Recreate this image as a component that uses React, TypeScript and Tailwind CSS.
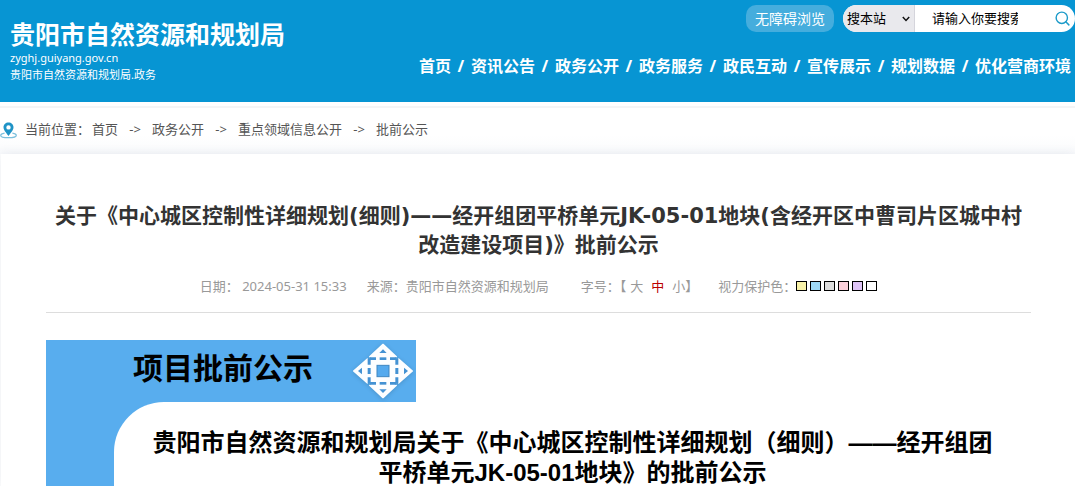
import { Search } from 'lucide-react';

const navItems = ['首页', '资讯公告', '政务公开', '政务服务', '政民互动', '宣传展示', '规划数据', '优化营商环境'];

const crumbs = ['首页', '政务公开', '重点领域信息公开', '批前公示'];

const eyeColors = [
    { name: '黄色', cls: 'bg-[#f9f3a9]' },
    { name: '蓝色', cls: 'bg-[#9fd9f6]' },
    { name: '灰色', cls: 'bg-[#dedede]' },
    { name: '粉色', cls: 'bg-[#fbd0da]' },
    { name: '紫色', cls: 'bg-[#e0c5f8]' },
    { name: '白色', cls: 'bg-white' },
];

function PinIcon() {
    return (
        <svg width="17" height="17" viewBox="0 0 17 17" aria-hidden="true">
            <path d="M4.6 11.2C1.9 11.6.7 12.5.7 13.4c0 1.400 3.400 2.300 7.800 2.300s7.800-.9 7.800-2.300c0-.9-1.200-1.800-3.900-2.200" fill="none" stroke="#7cc0dd" strokeWidth="1.200" />
            <path fillRule="evenodd" fill="#1f93c6" d="M8.500 0.500C5.600.5 3.500 2.600 3.500 5.300c0 3 3.200 6.200 5 8.600 1.800-2.400 5-5.600 5-8.600C13.500 2.600 11.400.5 8.500.5zM8.500 3.200a2.200 2.200 0 1 1 0 4.400 2.200 2.200 0 0 1 0-4.400z" />
        </svg>
    );
}

function PlanLogo() {
    return (
        <svg width="62" height="56" viewBox="6 5 186 168" aria-hidden="true" className="drop-shadow-sm">
            <path
                fill="#fdfeff"
                stroke="#fdfeff"
                strokeWidth="4"
                strokeLinejoin="round"
                d="M99 9L139 46H134V54H137V57H146V53L187 89L146 125V121H137V124H134V132H139L99 169L59 132H64V124H61V121H52V125L11 89L52 53V57H61V54H64V46H59Z"
            />
            <g fill="#4492d3">
                <rect x="81" y="72" width="36" height="34" fill="#55aaee" stroke="#3f86c2" strokeWidth="3" />
                <path d="M99 24L110 35H88Z" />
                <path d="M99 155L110 144H88Z" />
                <path d="M24 89L36 79V99Z" />
                <path d="M174 89L162 79V99Z" />
                <rect x="89" y="48" width="20" height="8" />
                <rect x="89" y="122" width="20" height="8" />
                <rect x="53" y="80" width="9" height="18" />
                <rect x="136" y="80" width="9" height="18" />
                <path d="M60 48H78V56H62V70H53V52H60Z" />
                <path d="M138 48H120V56H136V70H145V52H138Z" />
                <path d="M60 130H78V122H62V108H53V126H60Z" />
                <path d="M138 130H120V122H136V108H145V126H138Z" />
            </g>
        </svg>
    );
}

function Header() {
    return (
        <header className="flex h-[102px] shrink-0 justify-between bg-[#0795d3] text-white">
            <div className="flex shrink-0 flex-col pt-5 pl-[10px]">
                <a href="#" className="text-[25px] leading-[29px] font-bold">贵阳市自然资源和规划局</a>
                <span className="text-[11px] leading-[17px]">zyghj.guiyang.gov.cn</span>
                <span className="text-[11px] leading-[18px]">贵阳市自然资源和规划局.政务</span>
            </div>

            <div className="flex flex-col items-end pt-[5px]">
                <div className="flex h-[27px] gap-[9px]">
                    <button className="w-[88px] rounded-[10px] bg-[#45addd] text-sm">无障碍浏览</button>
                    <form className="flex w-[232px] items-stretch overflow-hidden rounded-full bg-white text-[13px] text-black">
                        <div className="relative flex w-[72px] shrink-0 border-r border-[#d5d5dc] bg-[#e9e9ed]">
                            <select aria-label="搜索范围" className="w-full appearance-none bg-transparent pl-1">
                                <option>搜本站</option>
                                <option>搜全网</option>
                            </select>
                            <svg className="pointer-events-none absolute top-[11px] right-1 h-[6px] w-2" viewBox="0 0 8 6" fill="none" stroke="#111" strokeWidth="1.500" aria-hidden="true">
                                <path d="M0.800 1L4 4.400L7.200 1" />
                            </svg>
                        </div>
                        <input
                            aria-label="搜索"
                            placeholder="请输入你要搜索"
                            className="ml-[17px] w-[86px] outline-none placeholder:text-black"
                        />
                        <button type="submit" aria-label="搜索" className="ml-auto pr-1 text-[#1d9bc9]">
                            <Search size={17} strokeWidth={2} />
                        </button>
                    </form>
                </div>
                <nav className="mt-[22px] mr-[4px] flex text-base leading-6 font-bold whitespace-nowrap">
                    {navItems.map((item, i) => (
                        <div key={item} className="flex">
                            {i > 0 && <span className="w-5 text-center">/</span>}
                            <a href="#">{item}</a>
                        </div>
                    ))}
                </nav>
            </div>
        </header>
    );
}

function Breadcrumb() {
    return (
        <div className="mt-1 flex h-12 shrink-0 items-center border-t-2 border-[#f4f5f6] bg-linear-to-b from-white from-60% to-[#f9fafc] pb-[2px] text-[13px] text-[#555]">
            <PinIcon />
            <span className="mr-[2px] ml-2">当前位置：</span>
            {crumbs.map((c, i) => (
                <div key={c} className="flex">
                    {i > 0 && <span className="w-[34px] text-center">-&gt;</span>}
                    <a href="#">{c}</a>
                </div>
            ))}
        </div>
    );
}

function Meta() {
    return (
        <div className="mt-4 flex h-[37px] items-start justify-center border-b border-[#ddd] text-[13px] leading-5 whitespace-nowrap text-[#999]">
            <span>日期： 2024-05-31 15:33</span>
            <span className="ml-5">来源：贵阳市自然资源和规划局</span>
            <div className="ml-8 flex">
                <span>字号：【</span>
                <div className="ml-1 flex gap-2">
                    <button>大</button>
                    <button className="text-[#b00]">中</button>
                    <button>小</button>
                </div>
                <span>】</span>
            </div>
            <div className="ml-5 flex items-center">
                <span>视力保护色：</span>
                <div className="flex gap-[3px]">
                    {eyeColors.map((c) => (
                        <button key={c.name} aria-label={c.name} className={`h-[10px] w-[11px] border border-black ${c.cls}`} />
                    ))}
                </div>
            </div>
        </div>
    );
}

export default function App() {
    return (
        <div className="flex h-screen flex-col overflow-hidden bg-white font-['Noto_Sans','Noto_Sans_CJK_SC',sans-serif]">
            <Header />
            <Breadcrumb />

            <main className="ml-px flex flex-1 flex-col bg-white px-[45px] pt-12 pr-11 shadow-[0_0_10px_rgba(60,80,120,0.1)]">
                <h1 className="px-2 text-center font-['DejaVu_Sans','Noto_Sans_CJK_SC',sans-serif] text-[21px] leading-[29px] font-bold text-[#333]">
                    关于《中心城区控制性详细规划(细则)——经开组团平桥单元JK-05-01地块(含经开区中曹司片区城中村改造建设项目)》批前公示
                </h1>
                <Meta />

                <article className="mt-[27px] flex flex-1 flex-col font-['Liberation_Sans','Noto_Sans_CJK_SC',sans-serif] font-bold text-black">
                    <div className="flex h-[62px] w-[370px] shrink-0 items-center justify-between bg-[#58adee] pr-[2px] pl-[87px]">
                        <span className="pb-1 text-[30px] leading-[54px]">项目批前公示</span>
                        <PlanLogo />
                    </div>
                    <div className="flex flex-1 bg-[#58adee] pl-[68px]">
                        <div className="flex-1 rounded-tl-[50px] bg-white pt-[26px] text-center text-2xl leading-[30px]">
                            <h2>
                                贵阳市自然资源和规划局关于《中心城区控制性详细规划（细则）——经开组团
                                <br />
                                平桥单元JK-05-01地块》的批前公示
                            </h2>
                        </div>
                    </div>
                </article>
            </main>
        </div>
    );
}
